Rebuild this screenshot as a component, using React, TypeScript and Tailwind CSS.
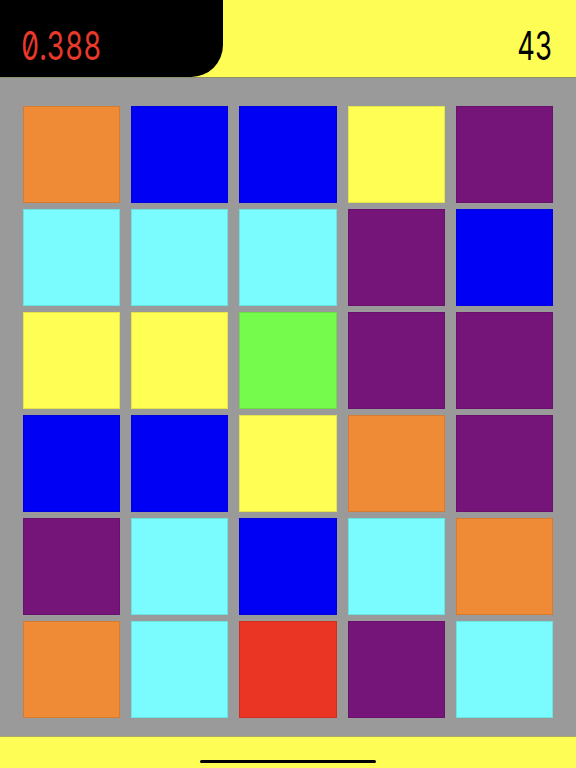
import React from 'react';

const COLORS: Record<string, string> = {
  o: 'bg-[#ef8a36]',
  b: 'bg-[#0000f5]',
  y: 'bg-[#fffe54]',
  p: 'bg-[#75157a]',
  c: 'bg-[#7afcfe]',
  g: 'bg-[#75fb4c]',
  r: 'bg-[#ea3424]',
};

// board layout, row by row
const BOARD = [
  'obbyp',
  'cccpb',
  'yygpp',
  'bbyop',
  'pcbco',
  'ocrpc',
];

const numFont = { fontFamily: 'Inter, "DejaVu Sans", sans-serif' };

export default function App() {
  return (
    <div className="w-[576px] h-[768px] flex flex-col bg-[#9a9a9a] overflow-hidden">
      {/* Top bar */}
      <div className="h-[78px] bg-[#fdfd55] flex items-stretch justify-between border-b border-[#8f8f6a]">
        <div className="w-[223px] bg-black rounded-br-[32px] flex items-center pl-[21px] pt-[14px]">
          <span
            className="text-[39px] leading-none font-normal text-[#e8392b] slashed-zero tabular-nums scale-x-[0.72] origin-left inline-block"
            style={numFont}
          >
            0.388
          </span>
        </div>
        <div className="flex items-center pr-[23px] pt-[14px]">
          <span
            className="text-[39px] leading-none font-normal text-black tabular-nums scale-x-[0.7] origin-right inline-block"
            style={numFont}
          >
            43
          </span>
        </div>
      </div>

      {/* Board */}
      <div className="flex-1 pt-[28px] px-[23px]">
        <div className="grid grid-cols-5 gap-x-[11px] gap-y-[6px]">
          {BOARD.flatMap((row, ri) =>
            row.split('').map((k, ci) => (
              <div
                key={`${ri}-${ci}`}
                className={`h-[97px] border border-black/10 ${COLORS[k]}`}
              />
            ))
          )}
        </div>
      </div>

      {/* Bottom bar with home indicator */}
      <div className="h-[32px] bg-[#fdfd55] border-t border-[#a8a86a] flex items-end justify-center pb-[5px]">
        <div className="w-[176px] h-[3px] rounded-full bg-black" />
      </div>
    </div>
  );
}
